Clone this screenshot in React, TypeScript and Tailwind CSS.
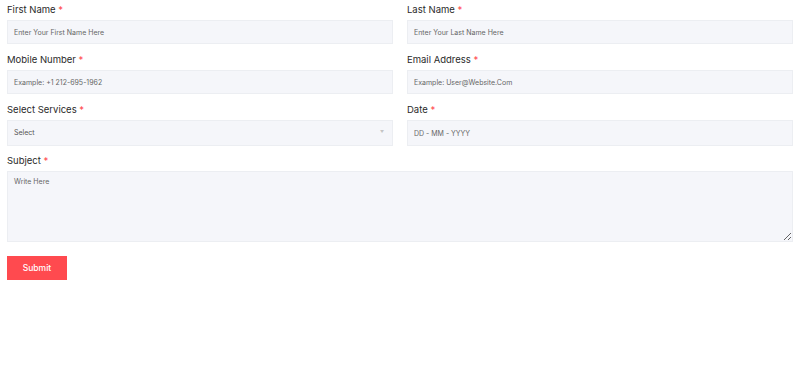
import React from 'react';

const font = { fontFamily: 'Inter, "Open Sans", sans-serif' };

interface FieldProps {
  label: string;
  children: React.ReactNode;
  className?: string;
}

const Field: React.FC<FieldProps> = ({ label, children, className }) => (
  <div className={`flex flex-col ${className ?? ''}`}>
    <label className="text-[9.5px] leading-[14px] text-[#2a2a2a] mb-[3px]">
      {label} <span className="text-[#ff4a4f]">*</span>
    </label>
    {children}
  </div>
);

const inputCls =
  'block h-6 w-full bg-[#f5f6fa] border border-[#eceef2] px-[6px] text-[7px] text-[#444] placeholder:text-[#666] outline-none';

const App: React.FC = () => {
  return (
    <div className="w-[800px] h-[379px] bg-white px-[7px] pt-[3px]" style={font}>
      <form className="grid grid-cols-2 gap-x-[14px] gap-y-[9px]">
        <Field label="First Name">
          <input className={inputCls} placeholder="Enter Your First Name Here" />
        </Field>
        <Field label="Last Name">
          <input className={inputCls} placeholder="Enter Your Last Name Here" />
        </Field>
        <Field label="Mobile Number">
          <input className={inputCls} placeholder="Example: +1 212-695-1962" />
        </Field>
        <Field label="Email Address">
          <input className={inputCls} placeholder="Example: User@Website.Com" />
        </Field>
        <Field label="Select Services">
          <div className="relative h-[26px]">
            <select className={`${inputCls} h-[26px] appearance-none text-[#555]`} defaultValue="">
              <option value="">Select</option>
            </select>
            <span className="absolute right-[9px] top-[10px] text-[4px] leading-none text-[#c4c4c4]">▼</span>
          </div>
        </Field>
        <Field label="Date">
          <input className={`${inputCls} h-[26px]`} placeholder="DD - MM - YYYY" />
        </Field>
        <Field label="Subject" className="col-span-2 -mt-px">
          <textarea
            className="block h-[71px] w-full bg-[#f5f6fa] border border-[#eceef2] px-[6px] py-[5px] text-[7px] text-[#444] placeholder:text-[#666] outline-none"
            placeholder="Write Here"
          />
        </Field>
      </form>
      <button className="block mt-[14px] w-[60px] h-[24px] bg-[#ff4a4f] text-white text-[8.5px] font-medium">
        Submit
      </button>
    </div>
  );
};

export default App;
